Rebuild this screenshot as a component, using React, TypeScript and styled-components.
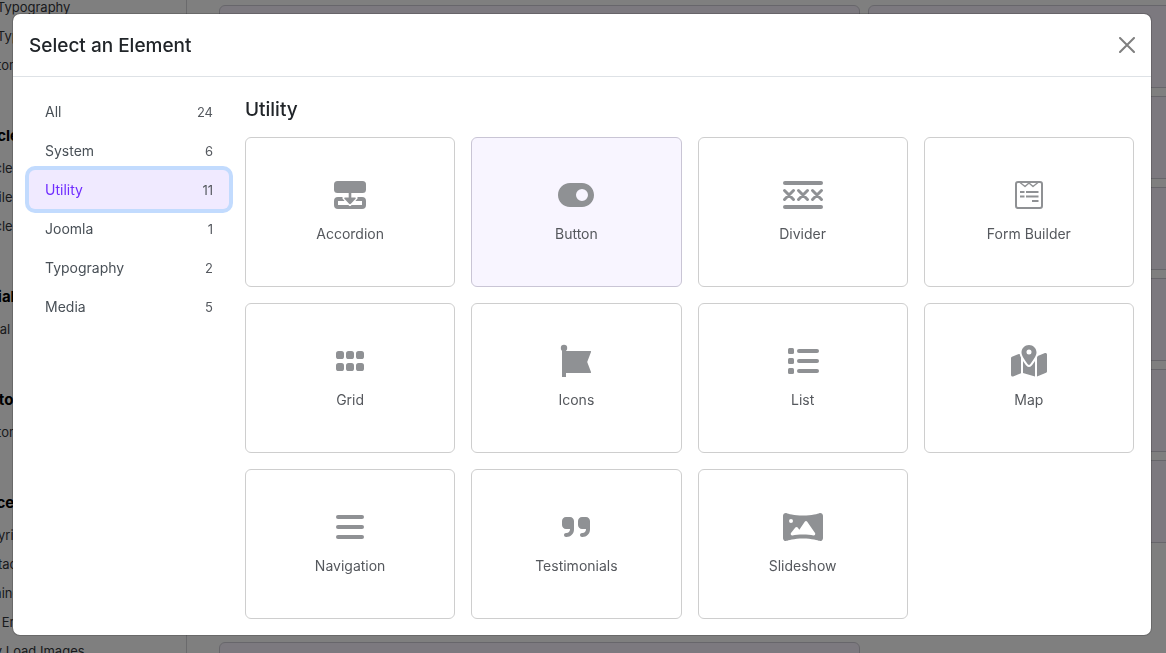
import React from "react";
import styled, { createGlobalStyle } from "styled-components";
import {
  FaMapLocationDot,
  FaPanorama,
  FaQuoteRight,
  FaToggleOn,
} from "react-icons/fa6";

const GlobalStyle = createGlobalStyle`
  *, *::before, *::after { box-sizing: border-box; }
  html, body { height: 100%; }
  body {
    margin: 0;
    overflow: hidden;
    background: #ffffff;
    color: #212529;
    font-family: Inter, "Liberation Sans", sans-serif;
    font-size: 14px;
    line-height: 21px;
  }
  #root { height: 100%; }
`;

/* ---------- page behind the dialog ---------- */

const Page = styled.div`
  display: flex;
  height: 100vh;
  overflow: hidden;
`;

const SettingsNav = styled.nav`
  flex: 0 0 187px;
  border-right: 1px solid #d4d4d8;
  overflow: hidden;
`;

const SettingsGroup = styled.section`
  margin: 0 0 44px -27px;
  white-space: nowrap;
`;

const GroupTitle = styled.h3`
  margin: 0 0 0 -3px;
  height: 30px;
  font-size: 15px;
  font-weight: 700;
  line-height: 24px;
  color: #000000;
`;

const SettingsLink = styled.a`
  display: block;
  height: 29px;
  font-size: 13px;
  line-height: 29px;
  color: #33363a;
  text-decoration: none;
`;

const FirstGroup = styled(SettingsGroup)`
  margin-top: -7px;
`;

const Canvas = styled.main`
  flex: 1;
  display: grid;
  grid-template-columns: 641px 1fr;
  gap: 8px;
  padding: 5px 0 0 32px;
`;

const CanvasColumn = styled.div`
  display: flex;
  flex-direction: column;
  gap: 8px;
`;

const Block = styled.div<{ $tall?: boolean }>`
  flex: 0 0 ${(p) => (p.$tall ? 629 : 83)}px;
  border: 1px solid #cfcdd6;
  border-radius: 6px;
  background: #f9f3ff;
`;

const WideBlock = styled(Block)`
  margin-right: -8px;
`;

/* ---------- dialog ---------- */

const Backdrop = styled.div`
  position: fixed;
  inset: 0;
  padding: 13px 14px 13px 12px;
  background: rgba(0, 0, 0, 0.5);
  overflow: hidden;
`;

const Dialog = styled.div`
  border: 1px solid rgba(0, 0, 0, 0.175);
  border-radius: 8px;
  background: #ffffff;
  background-clip: padding-box;
`;

const DialogHeader = styled.header`
  display: flex;
  align-items: center;
  justify-content: space-between;
  padding: 16px;
  border-bottom: 1px solid #dee2e6;
`;

const DialogTitle = styled.h2`
  margin: 0;
  padding-top: 2px;
  font-size: 19px;
  font-weight: 500;
  line-height: 28px;
`;

const CloseButton = styled.button`
  display: flex;
  padding: 0;
  border: 0;
  background: none;
  color: #7f7f7f;
  cursor: pointer;
`;

const DialogBody = styled.div`
  display: flex;
  gap: 16px;
  padding: 15px 17px 16px 16px;
`;

const CategoryList = styled.div`
  flex: 0 0 200px;
`;

const CategoryButton = styled.button<{ $active?: boolean }>`
  display: flex;
  align-items: baseline;
  justify-content: space-between;
  width: 100%;
  height: 39px;
  padding: 8px 16px;
  border: 0;
  border-radius: 6px;
  background: ${(p) => (p.$active ? "#f0eaff" : "none")};
  box-shadow: ${(p) => (p.$active ? "0 0 0 4px #c2dbfe" : "none")};
  color: ${(p) => (p.$active ? "#6f2cff" : "#495057")};
  font: inherit;
  line-height: 23px;
  cursor: pointer;
`;

const Count = styled.span`
  font-size: 13px;
  color: #55595f;
`;

const Content = styled.section`
  flex: 1;
  min-width: 0;
`;

const SectionTitle = styled.h3`
  margin: 0 0 10px;
  font-size: 19px;
  font-weight: 500;
  line-height: 35px;
`;

const ElementGrid = styled.div`
  display: grid;
  grid-template-columns: repeat(4, 1fr);
  gap: 16px;
`;

const ElementCard = styled.button<{ $active?: boolean }>`
  display: flex;
  flex-direction: column;
  align-items: center;
  gap: 8px;
  height: 150px;
  padding: 37px 8px 0;
  border: 1px solid ${(p) => (p.$active ? "#c9c5d5" : "#cecece")};
  border-radius: 6px;
  background: ${(p) => (p.$active ? "#f8f5ff" : "#ffffff")};
  color: #55585d;
  font: inherit;
  line-height: 22px;
  cursor: pointer;
`;

const IconBox = styled.span`
  display: flex;
  align-items: center;
  justify-content: center;
  width: 48px;
  height: 40px;
  color: #8f9194;
`;

/* ---------- icons ---------- */

const Glyph = ({ children }: { children: React.ReactNode }) => (
  <svg width="48" height="40" viewBox="0 0 48 40" fill="currentColor" aria-hidden="true">
    {children}
  </svg>
);

const AccordionIcon = () => (
  <Glyph>
    <rect x="8" y="6" width="32" height="12" rx="3.5" />
    <rect x="10" y="24" width="28" height="8" rx="2" fill="none" stroke="currentColor" strokeWidth="4" />
    <path d="M17 20h14v3.5L24.8 30.500h-1.600L17 23.500z" fill="#ffffff" stroke="#ffffff" strokeLinejoin="round" />
    <path d="M22.700 17.500h2.600V22.400h3.700a.8.8 0 0 1 .6 1.300l-4.700 5a1.300 1.300 0 0 1-1.800 0l-4.700-5a.8.8 0 0 1 .6-1.300h3.700z" />
  </Glyph>
);

const DividerIcon = () => (
  <Glyph>
    <rect x="4" y="6" width="40" height="4" rx="2" />
    <rect x="4" y="30" width="40" height="4" rx="2" />
    <path
      d="M5.500 15.500l9 9m0-9l-9 9M19.500 15.500l9 9m0-9l-9 9M33.500 15.500l9 9m0-9l-9 9"
      fill="none"
      stroke="currentColor"
      strokeWidth="3"
      strokeLinecap="round"
    />
  </Glyph>
);

const FormIcon = () => (
  <Glyph>
    <g fill="none" stroke="currentColor" strokeWidth="2">
      <rect x="11" y="7" width="26" height="26" rx="2" />
      <path d="M15 7.500l5 4 4-3.500 4 3.500 5-4" strokeWidth="1.400" strokeLinejoin="round" />
      <path d="M15 17h4.500M21 17h12.500M15 21.500h4.500M21 21.500h12.500M27 26h6.500" />
    </g>
  </Glyph>
);

const GridIcon = () => (
  <Glyph>
    {[10, 22].map((y) =>
      [10, 20, 30].map((x) => (
        <rect key={`${x}-${y}`} x={x} y={y} width="8" height="8" rx="2.6" />
      ))
    )}
  </Glyph>
);

const FlagIcon = () => (
  <Glyph>
    <circle cx="12" cy="7" r="3.200" />
    <path d="M10 7h4v3h24.200a.8.8 0 0 1 .8 1.100L35.200 21l3.800 9.900a.8.8 0 0 1-.8 1.100H14v4h-4z" />
  </Glyph>
);

const ListIcon = () => (
  <Glyph>
    {[7, 17, 27].map((y) => (
      <React.Fragment key={y}>
        <rect x="9" y={y} width="6" height="6" rx="1.500" />
        <rect x="18" y={y + 1} width="22" height="4" rx="2" />
      </React.Fragment>
    ))}
  </Glyph>
);

const BarsIcon = () => (
  <Glyph>
    {[8, 18, 28].map((y) => (
      <rect key={y} x="10" y={y} width="28" height="4" rx="2" />
    ))}
  </Glyph>
);

const CloseIcon = () => (
  <svg width="16" height="16" viewBox="0 0 16 16" aria-hidden="true">
    <path d="M1 1l14 14M15 1L1 15" stroke="currentColor" strokeWidth="2" strokeLinecap="round" />
  </svg>
);

/* ---------- data ---------- */

const categories = [
  { name: "All", count: 24 },
  { name: "System", count: 6 },
  { name: "Utility", count: 11 },
  { name: "Joomla", count: 1 },
  { name: "Typography", count: 2 },
  { name: "Media", count: 5 },
];

const elements = [
  { name: "Accordion", icon: <AccordionIcon /> },
  { name: "Button", icon: <FaToggleOn size={36} /> },
  { name: "Divider", icon: <DividerIcon /> },
  { name: "Form Builder", icon: <FormIcon /> },
  { name: "Grid", icon: <GridIcon /> },
  { name: "Icons", icon: <FlagIcon /> },
  { name: "List", icon: <ListIcon /> },
  { name: "Map", icon: <FaMapLocationDot size={36} /> },
  { name: "Navigation", icon: <BarsIcon /> },
  { name: "Testimonials", icon: <FaQuoteRight size={32} /> },
  { name: "Slideshow", icon: <FaPanorama size={40} /> },
];

const settings = [
  { title: "Article", links: ["Article", "Profile", "Article"] },
  { title: "Social", links: ["Social"] },
  { title: "Custom", links: ["Custom"] },
  {
    title: "Miscellaneous",
    links: ["Copyright", "Contact", "Coming Soon", "404 Error", "Lazy Load Images"],
  },
];

export default function App() {
  return (
    <>
      <GlobalStyle />
      <Page aria-hidden="true">
        <SettingsNav>
          <FirstGroup>
            {["Set Typography", "Set Typography", "Custom"].map((label, i) => (
              <SettingsLink key={i} href="#">
                {label}
              </SettingsLink>
            ))}
          </FirstGroup>
          {settings.map((group) => (
            <SettingsGroup key={group.title}>
              <GroupTitle>{group.title}</GroupTitle>
              {group.links.map((label, i) => (
                <SettingsLink key={i} href="#">
                  {label}
                </SettingsLink>
              ))}
            </SettingsGroup>
          ))}
        </SettingsNav>
        <Canvas>
          <CanvasColumn>
            <Block $tall />
            <Block />
          </CanvasColumn>
          <CanvasColumn>
            {[1, 2, 3, 4, 5, 6].map((n) => (
              <WideBlock key={n} />
            ))}
          </CanvasColumn>
        </Canvas>
      </Page>

      <Backdrop>
        <Dialog role="dialog" aria-modal="true" aria-labelledby="dialog-title">
          <DialogHeader>
            <DialogTitle id="dialog-title">Select an Element</DialogTitle>
            <CloseButton type="button" aria-label="Close">
              <CloseIcon />
            </CloseButton>
          </DialogHeader>
          <DialogBody>
            <CategoryList>
              {categories.map((c) => (
                <CategoryButton key={c.name} type="button" $active={c.name === "Utility"}>
                  {c.name}
                  <Count>{c.count}</Count>
                </CategoryButton>
              ))}
            </CategoryList>
            <Content>
              <SectionTitle>Utility</SectionTitle>
              <ElementGrid>
                {elements.map((e) => (
                  <ElementCard key={e.name} type="button" $active={e.name === "Button"}>
                    <IconBox>{e.icon}</IconBox>
                    {e.name}
                  </ElementCard>
                ))}
              </ElementGrid>
            </Content>
          </DialogBody>
        </Dialog>
      </Backdrop>
    </>
  );
}
